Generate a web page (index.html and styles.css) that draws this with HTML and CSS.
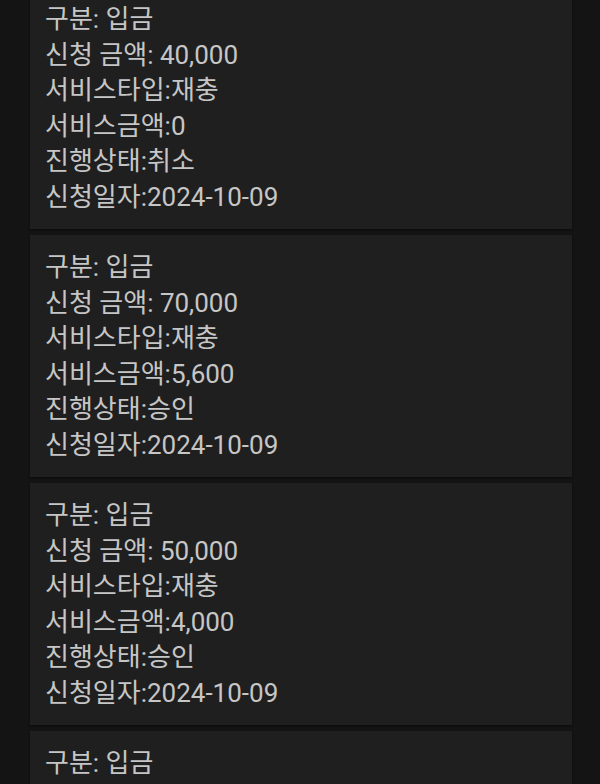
FILE: index.html
```html
<!DOCTYPE html>
<html>
<head>
  <meta charset="utf-8">
  <title>입금 신청 내역</title>
  <link rel="stylesheet" href="styles.css">
</head>
<body>
  <div class="list">
    <div class="card">
      <p>구분: 입금</p>
      <p>신청 금액: 40,000</p>
      <p>서비스타입:재충</p>
      <p>서비스금액:0</p>
      <p>진행상태:취소</p>
      <p>신청일자:2024-10-09</p>
    </div>
    <div class="card">
      <p>구분: 입금</p>
      <p>신청 금액: 70,000</p>
      <p>서비스타입:재충</p>
      <p>서비스금액:5,600</p>
      <p>진행상태:승인</p>
      <p>신청일자:2024-10-09</p>
    </div>
    <div class="card">
      <p>구분: 입금</p>
      <p>신청 금액: 50,000</p>
      <p>서비스타입:재충</p>
      <p>서비스금액:4,000</p>
      <p>진행상태:승인</p>
      <p>신청일자:2024-10-09</p>
    </div>
    <div class="card">
      <p>구분: 입금</p>
      <p>신청 금액: 30,000</p>
      <p>서비스타입:재충</p>
      <p>서비스금액:2,400</p>
      <p>진행상태:승인</p>
      <p>신청일자:2024-10-09</p>
    </div>
  </div>
</body>
</html>
```

FILE: styles.css
```css
html, body { margin: 0; height: 100%; overflow: hidden; background: #141414; }
body { font-family: Roboto, "Noto Sans CJK KR", sans-serif; color: #c6c6c6; }
.list { display: flex; flex-direction: column; gap: 6px; padding: 0 28px 0 30px; margin-top: -13px; }
.card { background: #1f1f1f; padding: 15px 15px 14px; box-shadow: 0 1px 2px rgba(0,0,0,0.5); }
.card p { margin: 0; font-size: 26px; line-height: 35.5px; }
```
